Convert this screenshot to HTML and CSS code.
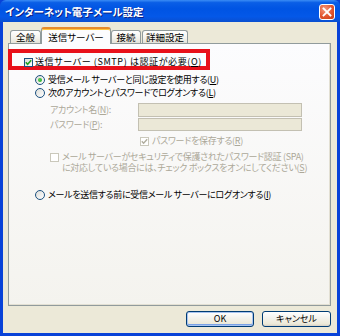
FILE: index.html
```html
<!DOCTYPE html>
<html lang="ja">
<head>
<meta charset="utf-8">
<link rel="stylesheet" href="styles.css">
</head>
<body>
<div class="window">
  <div class="titlebar">
    <span class="title">インターネット電子メール設定</span>
    <span class="close"><svg width="10" height="10" viewBox="0 0 10 10"><path d="M1.5 1.5L8.5 8.5M8.5 1.5L1.5 8.5" stroke="#fff" stroke-width="1.8" stroke-linecap="square"/></svg></span>
  </div>
  <div class="client">
    <div class="tabs">
      <div class="tab t1">全般</div>
      <div class="tab active">送信サーバー</div>
      <div class="tab t3">接続</div>
      <div class="tab t4">詳細設定</div>
    </div>
    <div class="panel">
      <div class="highlight"></div>
      <div class="row r1">
        <span class="cb"><svg width="7" height="7" viewBox="0 0 7 7"><path d="M0.8 3.2L2.6 5.2L6.2 1.2" fill="none" stroke="#21a121" stroke-width="1.6"/></svg></span>
        <span class="lbl wide">送信サーバー (SMTP) は認証が必要(<u>O</u>)</span>
      </div>
      <div class="row r2">
        <span class="rb on"><span class="dot"></span></span>
        <span class="lbl">受信メール サーバーと同じ設定を使用する(<u>U</u>)</span>
      </div>
      <div class="row r3">
        <span class="rb"></span>
        <span class="lbl">次のアカウントとパスワードでログオンする(<u>L</u>)</span>
      </div>
      <div class="row r4 dis">
        <span class="flabel">アカウント名(<u>N</u>):</span>
        <span class="input"></span>
      </div>
      <div class="row r5 dis">
        <span class="flabel">パスワード(<u>P</u>):</span>
        <span class="input"></span>
      </div>
      <div class="row r6 dis">
        <span class="cb off"><svg width="7" height="7" viewBox="0 0 7 7"><path d="M0.8 3.2L2.6 5.2L6.2 1.2" fill="none" stroke="#b0ad9e" stroke-width="1.4"/></svg></span>
        <span class="lbl">パスワードを保存する(<u>R</u>)</span>
      </div>
      <div class="row r7 dis">
        <span class="cb off"></span>
        <span class="lbl multi">メール サーバーがセキュリティで保護されたパスワード認証 (SPA)<br>に対応している場合には、チェック ボックスをオンにしてください(<u>S</u>)</span>
      </div>
      <div class="row r8">
        <span class="rb"></span>
        <span class="lbl">メールを送信する前に受信メール サーバーにログオンする(<u>I</u>)</span>
      </div>
    </div>
    <div class="buttons">
      <span class="btn default">OK</span>
      <span class="btn">キャンセル</span>
    </div>
  </div>
</div>
</body>
</html>
```

FILE: styles.css
```css
* { box-sizing: border-box; }
html, body { margin: 0; padding: 0; }
body {
  width: 340px;
  height: 336px;
  overflow: hidden;
  font-family: "Noto Sans CJK JP", "Liberation Sans", sans-serif;
  font-size: 9px;
  font-feature-settings: "palt" 1;
  color: #000;
}
.window {
  width: 340px;
  height: 336px;
  display: flex;
  flex-direction: column;
  background: #0842d8;
}
.titlebar {
  height: 22px;
  flex: none;
  display: flex;
  align-items: center;
  justify-content: space-between;
  padding: 0 5px 0 5px;
  background: linear-gradient(#3b8cf5 0%, #0a5ee6 12%, #0054e3 40%, #0458e8 75%, #0a4fd0 100%);
  border-radius: 6px 6px 0 0;
}
.title {
  color: #fff;
  font-weight: bold;
  font-size: 10.5px;
  text-shadow: 1px 1px 0 #0a1e82;
}
.close {
  width: 16px;
  height: 16px;
  margin-top: 2px;
  border: 1px solid #fff;
  border-radius: 3px;
  background: radial-gradient(circle at 35% 30%, #f49a7e 0%, #e2552f 55%, #c43c12 100%);
  display: flex;
  align-items: center;
  justify-content: center;
}
.client {
  flex: 1;
  margin: 0 3px 3px 3px;
  background: #ece9d8;
  display: flex;
  flex-direction: column;
  padding: 5px 6px 6px 5px;
}
.tabs {
  height: 16px;
  display: flex;
  align-items: flex-start;
  padding-left: 2px;
  position: relative;
  z-index: 2;
}
.tab {
  height: 13px;
  margin-top: 3px;
  border: 1px solid #919b9c;
  border-bottom: none;
  border-radius: 3px 3px 0 0;
  background: linear-gradient(#ffffff, #f3f2ec 60%, #e4e2d8);
  display: flex;
  align-items: center;
  justify-content: center;
  line-height: 12px;
  font-size: 9.5px;
}
.t1 { width: 31px; }
.t3 { width: 30px; }
.t4 { width: 46px; margin-left: 1px; }
.active {
  width: 70px;
  height: 17px;
  margin-top: 0;
  border-top: 2px solid #e68b2c;
  background: #fcfcfe;
  box-shadow: inset 0 1px 0 #ffc73c;
  padding-top: 1px;
}
.panel {
  height: 263px;
  flex: none;
  border: 1px solid #919b9c;
  background: linear-gradient(#fcfcfe, #f4f3ee);
  position: relative;
  box-shadow: inset -1px -1px 0 #e3e0d3;
}
.highlight {
  position: absolute;
  left: -1px;
  top: 5px;
  width: 202px;
  height: 21px;
  border: 4px solid #e8101a;
}
.row {
  display: flex;
  align-items: center;
  height: 12px;
  line-height: 12px;
  white-space: nowrap;
}
.r1 { margin-top: 12px; padding-left: 15px; position: relative; }
.r2 { margin-top: 6px; padding-left: 26px; }
.r3 { margin-top: 1px; padding-left: 26px; }
.r4 { margin-top: 4px; padding-left: 41px; height: 14px; }
.r5 { margin-top: 1px; padding-left: 41px; height: 13px; }
.r6 { margin-top: 4px; padding-left: 131px; }
.r7 { margin-top: 4px; padding-left: 41px; height: auto; align-items: flex-start; }
.r8 { margin-top: 16px; padding-left: 26px; }
.dis { color: #aca899; }
.lbl, .flabel { letter-spacing: -0.3px; }
.lbl.wide { letter-spacing: 0.6px; }
.cb {
  width: 9px;
  height: 9px;
  flex: none;
  border: 1px solid #1c5180;
  background: linear-gradient(135deg, #dcdcd7, #fff);
  display: flex;
  align-items: center;
  justify-content: center;
  margin-right: 2px;
}
.cb.off {
  border-color: #cac8bb;
  background: #fff;
  margin-right: 3px;
}
.r7 .cb { margin-top: 2px; }
.rb {
  width: 10px;
  height: 10px;
  flex: none;
  border: 1px solid #1c5180;
  border-radius: 50%;
  background: linear-gradient(135deg, #dcdcd7, #fff);
  margin-right: 3px;
  display: flex;
  align-items: center;
  justify-content: center;
}
.dot {
  width: 4px;
  height: 4px;
  border-radius: 50%;
  background: radial-gradient(circle at 40% 40%, #55d155, #21a121);
}
.lbl.multi { line-height: 11px; }
.flabel { width: 88px; flex: none; }
.input {
  width: 164px;
  height: 100%;
  border: 1px solid #c3c0b2;
  background: #ebe8d7;
}
.buttons {
  margin-top: 5px;
  height: 16px;
  display: flex;
  justify-content: flex-end;
  gap: 8px;
}
.btn {
  width: 68px;
  height: 16px;
  border: 1px solid #003c74;
  border-radius: 3px;
  background: linear-gradient(#ffffff, #f4f3ee 40%, #ece9d8 85%, #d6d0c5);
  display: flex;
  align-items: center;
  justify-content: center;
  line-height: 12px;
}
.btn:last-child { width: 69px; }
.default {
  box-shadow: inset 0 0 0 1px #a8c4f0, inset 0 -1px 0 1px #7aa2e6;
}
```
